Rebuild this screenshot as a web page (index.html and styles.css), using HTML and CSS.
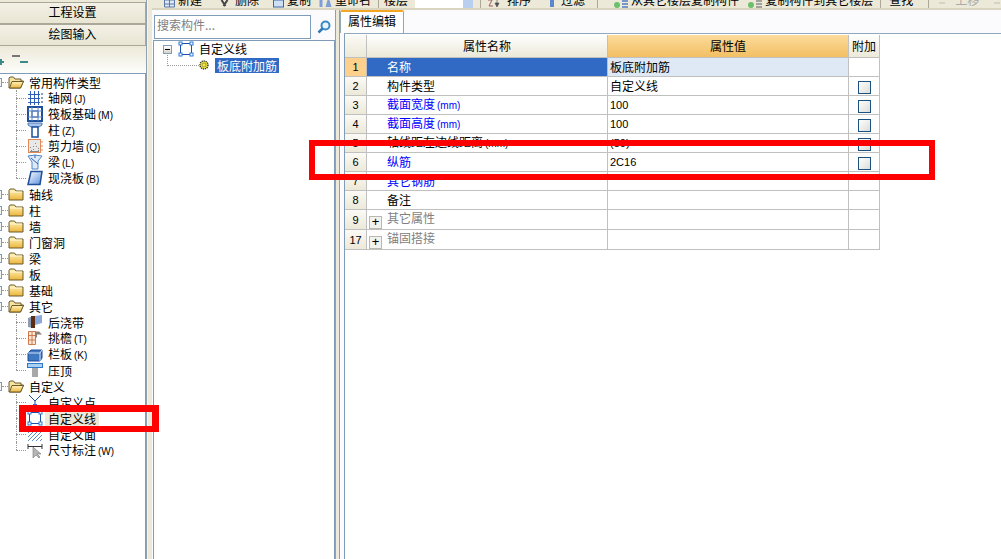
FILE: index.html
```html
<!DOCTYPE html>
<html lang="zh-CN">
<head>
    <meta charset="UTF-8">
    <meta name="viewport" content="width=device-width, initial-scale=1.0">
    <title>工程设置</title>
    <link rel="stylesheet" href="styles.css">
</head>
<body>
    <svg class="defs" width="0" height="0">
        <defs>
            <linearGradient id="gFolder" x1="0" y1="0" x2="0" y2="1">
                <stop offset="0" stop-color="#fff3b8"/>
                <stop offset="1" stop-color="#eeb53c"/>
            </linearGradient>
            <linearGradient id="gSlab" x1="0" y1="0" x2="1" y2="1">
                <stop offset="0" stop-color="#ffffff"/>
                <stop offset="1" stop-color="#5b8fdc"/>
            </linearGradient>
            <symbol id="folder" viewBox="0 0 16 16">
                <path d="M1 4.500V14h14V5H8L6.500 3H2z" fill="url(#gFolder)" stroke="#6b5a2a"/>
                <path d="M2 6h12" stroke="#fff8d8"/>
            </symbol>
            <symbol id="folderOpen" viewBox="0 0 16 16">
                <path d="M1 4v10h11.500L15.500 7H13V5H7L5.500 3H2z" fill="#f6e3a0" stroke="#6b5a2a"/>
                <path d="M1.500 14L4 7.500h11.500L12.500 14z" fill="url(#gFolder)" stroke="#6b5a2a"/>
            </symbol>
            <symbol id="grid" viewBox="0 0 16 16">
                <path d="M3.500 1v14M7.500 1v14M11.500 1v14M1 4.500h12M1 8.500h12M1 12.500h12" stroke="#2d5fb8" fill="none"/>
                <path d="M14 3h2v2h-2zM14 7h2v2h-2zM14 11h2v2h-2z" fill="#8a9fc0"/>
            </symbol>
            <symbol id="raft" viewBox="0 0 16 16">
                <rect x="1" y="1" width="14" height="14" fill="#fff" stroke="#1f4f9c" stroke-width="2"/>
                <rect x="5" y="5" width="6" height="6" fill="#fff" stroke="#1f4f9c"/>
                <path d="M1 5h14M1 11h14M5 1v14M11 1v14" stroke="#5f86c4"/>
            </symbol>
            <symbol id="column" viewBox="0 0 16 16">
                <path d="M1 1h14v2l-3 2H4L1 3z" fill="#a9c4ea" stroke="#4f7cb8"/>
                <path d="M5 5h6v10H5z" fill="#fff" stroke="#1f4f9c" stroke-width="1.500"/>
            </symbol>
            <symbol id="wall" viewBox="0 0 16 16">
                <rect x="1.500" y="1.500" width="12" height="13" fill="#e8e8e8" stroke="#e08a5a"/>
                <path d="M3 9h1v1H3zM6 11h1v1H6zM9 8h1v1H9zM11 12h1v1h-1zM4 12h1v1H4zM8 5h1v1H8zM11 10h1v1h-1zM6 8h1v1H6zM3 13h9v1H3z" fill="#888"/>
                <path d="M15 3v2M15 7v2M15 11v2" stroke="#e08a5a"/>
            </symbol>
            <symbol id="beam" viewBox="0 0 16 16">
                <path d="M1 2l7-1 7 1-4 5v8H5V8z" fill="#dfeaf8" stroke="#4f86c6"/>
                <path d="M4 4l7 6M8 1v3" stroke="#2d5fb8"/>
            </symbol>
            <symbol id="slab" viewBox="0 0 16 16">
                <path d="M4 1.500h11l-2 13H1z" fill="url(#gSlab)" stroke="#1f4f9c" stroke-width="1.500"/>
            </symbol>
            <symbol id="strip" viewBox="0 0 16 16">
                <path d="M1 4l5-2v12l-5-1z" fill="#8d9bb0"/>
                <path d="M4 2h4v12H4z" fill="#5a2d14"/>
                <path d="M8 2l7-1v8l-7 2z" fill="#8aa8dc"/>
            </symbol>
            <symbol id="eave" viewBox="0 0 16 16">
                <path d="M1.500 1.500h7v13h-7zM1.500 5.500h7M1.500 10h7M5 1.500v13" fill="#fbe6d8" stroke="#d07a4a"/>
                <path d="M8 1.500h4l3 3H10v3H8z" fill="#8b7f73"/>
            </symbol>
            <symbol id="parapet" viewBox="0 0 16 16">
                <path d="M1 7l3-3h11v8l-2 3H1z" fill="#3d78c0" stroke="#1f4f9c"/>
                <path d="M1 7h12v8M13 7l2-3" stroke="#cfe0f5" fill="none"/>
            </symbol>
            <symbol id="cap" viewBox="0 0 16 16">
                <rect x="0.500" y="1.500" width="15" height="4" fill="#a9d0f5" stroke="#2d78c8"/>
                <rect x="5" y="6" width="6" height="9" fill="#a8a8a8"/>
            </symbol>
            <symbol id="point" viewBox="0 0 16 16">
                <path d="M2 1l6 6 6-6M8 7v4" stroke="#1f4f9c" fill="none"/>
                <rect x="6" y="10" width="4" height="4" fill="#2d78d8"/>
            </symbol>
            <symbol id="line" viewBox="0 0 16 16">
                <rect x="2.500" y="2.500" width="11" height="11" fill="none" stroke="#1d4fa8"/>
                <rect x="1" y="1" width="3" height="3" fill="#fff" stroke="#2d78d8"/>
                <rect x="12" y="1" width="3" height="3" fill="#fff" stroke="#2d78d8"/>
                <rect x="1" y="12" width="3" height="3" fill="#fff" stroke="#2d78d8"/>
                <rect x="12" y="12" width="3" height="3" fill="#fff" stroke="#2d78d8"/>
            </symbol>
            <symbol id="area" viewBox="0 0 16 16">
                <path d="M1 7l6-6M1 11L11 1M1 15L15 1M5 15L15 5M9 15l6-6M13 15l2-2" stroke="#5d8ac8"/>
            </symbol>
            <symbol id="dim" viewBox="0 0 16 16">
                <path d="M1 2v5M15 2v5M1 4.500h14" stroke="#333" fill="none"/>
                <path d="M6 5v11l3-3 3 3 1-1-3-3h4z" fill="#b5b5b5" stroke="#777" stroke-width=".6"/>
            </symbol>
            <symbol id="gear" viewBox="0 0 10 10">
                <circle cx="5" cy="5" r="4" fill="#f5e93a" stroke="#333" stroke-width="1.400" stroke-dasharray="1.200 .8"/>
                <circle cx="5" cy="5" r="2" fill="#f5e93a" stroke="#555" stroke-width=".5"/>
            </symbol>
        </defs>
    </svg>

    <aside class="side">
        <div class="side-btn">工程设置</div>
        <div class="side-btn">绘图输入</div>
        <div class="side-tools">
            <svg width="30" height="12" viewBox="0 0 30 12"><path d="M-2 8h6M1 5v6" stroke="#3d8a8a" stroke-width="2"/><path d="M12 2h8" stroke="#777" stroke-width="2"/><path d="M20 8h8" stroke="#3d8a8a" stroke-width="2"/></svg>
        </div>
        <div class="tree">
            <div class="group"><span class="exp"></span><span class="dots"></span><svg class="ic"><use href="#folderOpen"/></svg><span class="label">常用构件类型</span></div>
            <ul class="kids">
                <li><svg class="ic"><use href="#grid"/></svg><span class="name">轴网<span class="key">(J)</span></span></li>
                <li><svg class="ic"><use href="#raft"/></svg><span class="name">筏板基础<span class="key">(M)</span></span></li>
                <li><svg class="ic"><use href="#column"/></svg><span class="name">柱<span class="key">(Z)</span></span></li>
                <li><svg class="ic"><use href="#wall"/></svg><span class="name">剪力墙<span class="key">(Q)</span></span></li>
                <li><svg class="ic"><use href="#beam"/></svg><span class="name">梁<span class="key">(L)</span></span></li>
                <li><svg class="ic"><use href="#slab"/></svg><span class="name">现浇板<span class="key">(B)</span></span></li>
            </ul>
            <div class="group"><span class="exp"></span><span class="dots"></span><svg class="ic"><use href="#folder"/></svg><span class="label">轴线</span></div>
            <div class="group"><span class="exp"></span><span class="dots"></span><svg class="ic"><use href="#folder"/></svg><span class="label">柱</span></div>
            <div class="group"><span class="exp"></span><span class="dots"></span><svg class="ic"><use href="#folder"/></svg><span class="label">墙</span></div>
            <div class="group"><span class="exp"></span><span class="dots"></span><svg class="ic"><use href="#folder"/></svg><span class="label">门窗洞</span></div>
            <div class="group"><span class="exp"></span><span class="dots"></span><svg class="ic"><use href="#folder"/></svg><span class="label">梁</span></div>
            <div class="group"><span class="exp"></span><span class="dots"></span><svg class="ic"><use href="#folder"/></svg><span class="label">板</span></div>
            <div class="group"><span class="exp"></span><span class="dots"></span><svg class="ic"><use href="#folder"/></svg><span class="label">基础</span></div>
            <div class="group"><span class="exp"></span><span class="dots"></span><svg class="ic"><use href="#folderOpen"/></svg><span class="label">其它</span></div>
            <ul class="kids">
                <li><svg class="ic"><use href="#strip"/></svg><span class="name">后浇带</span></li>
                <li><svg class="ic"><use href="#eave"/></svg><span class="name">挑檐<span class="key">(T)</span></span></li>
                <li><svg class="ic"><use href="#parapet"/></svg><span class="name">栏板<span class="key">(K)</span></span></li>
                <li><svg class="ic"><use href="#cap"/></svg><span class="name">压顶</span></li>
            </ul>
            <div class="group"><span class="exp"></span><span class="dots"></span><svg class="ic"><use href="#folderOpen"/></svg><span class="label">自定义</span></div>
            <ul class="kids">
                <li><svg class="ic"><use href="#point"/></svg><span class="name">自定义点</span></li>
                <li><svg class="ic"><use href="#line"/></svg><span class="name current">自定义线</span></li>
                <li><svg class="ic"><use href="#area"/></svg><span class="name">自定义面</span></li>
                <li><svg class="ic"><use href="#dim"/></svg><span class="name">尺寸标注<span class="key">(W)</span></span></li>
            </ul>
        </div>
    </aside>

    <div class="split-left"></div>

    <div class="main">
        <div class="toolbar">
            <div class="tool m12"><svg class="tb-ic" viewBox="0 -16 11 16"><path d="M.5 -8h10v7H.5zM.5 -4h10M5.500 -8v7" fill="#dfe8f5" stroke="#5a78a8"/></svg><span>新建</span></div>
            <div class="tool m16"><svg class="tb-ic wide" viewBox="0 -16 13 16"><path d="M3 -8l4 6M9 -8L5 -2" stroke="#444" stroke-width="2"/></svg><span>删除</span></div>
            <div class="tool m14"><svg class="tb-ic" viewBox="0 -16 11 16"><rect x=".5" y="-8" width="10" height="7" fill="#cfe0f5" stroke="#3d68a8"/></svg><span>复制</span></div>
            <div class="tool m7"><svg class="tb-ic wide" viewBox="0 -16 13 16"><path d="M1 -8h3v7H1zM7 -1l2-7h2l2 7" fill="#7f9fd8"/></svg><span>重命名</span></div>
            <div class="sep m7"></div>
            <div class="tool m5"><span>楼层</span></div>
            <div class="floor-select m7"><span class="floor-arrow"></span></div>
            <div class="sep m7"></div>
            <div class="tool m7 gap5"><svg class="tb-ic wide" viewBox="0 -16 14 16"><path d="M0 -8h4l-3 6h4" fill="none" stroke="#a06060"/><path d="M9 -8v4M7 -5l2 4 2-4z" fill="#555" stroke="#444" stroke-width=".6"/></svg><span>排序</span></div>
            <div class="tool m16"><svg class="tb-ic" viewBox="0 -16 11 16"><path d="M3 -8h4v7H3z" fill="#5a88cc"/></svg><span>过滤</span></div>
            <div class="sep m12"></div>
            <div class="tool m16"><svg class="tb-ic wide" viewBox="0 -16 14 16"><circle cx="3" cy="-3" r="3" fill="#6cbf6c"/><path d="M8 -7h6M8 -4h6M8 -1h6" stroke="#4f7cc8" stroke-width="1.500"/></svg><span>从其它楼层复制构件</span></div>
            <div class="tool m9"><svg class="tb-ic wide" viewBox="0 -16 14 16"><circle cx="3" cy="-3" r="3" fill="#6cbf6c"/><path d="M8 -7h6M8 -4h6M8 -1h6" stroke="#888" stroke-width="1.500"/></svg><span>复制构件到其它楼层</span></div>
            <div class="sep m7"></div>
            <div class="tool m8"><span>查找</span></div>
            <div class="sep m15"></div>
            <div class="tool m10 off"><svg class="tb-ic small" viewBox="0 -16 7 16"><path d="M0 -5h6" stroke="#bbb"/></svg><span>上移</span></div>
            <div class="tool m15 off"><svg class="tb-ic small" viewBox="0 -16 7 16"><path d="M0 -5h6" stroke="#bbb"/></svg></div>
        </div>

        <div class="content">
            <section class="mid">
                <div class="search">
                    <div class="search-box">搜索构件...</div>
                    <svg class="search-btn" viewBox="0 0 14 14"><circle cx="8.500" cy="5.500" r="4" fill="#e8f3fb" stroke="#3d8ac4" stroke-width="2"/><path d="M5.500 8.500L1.500 12.500" stroke="#2f78b8" stroke-width="2.500"/></svg>
                </div>
                <div class="parts">
                    <div class="part-row">
                        <span class="exp-box"></span>
                        <svg class="ic"><use href="#line"/></svg>
                        <span class="part-name">自定义线</span>
                    </div>
                    <div class="part-child">
                        <svg class="gear"><use href="#gear"/></svg>
                        <span class="selected">板底附加筋</span>
                    </div>
                </div>
            </section>

            <div class="split-right"></div>

            <section class="props">
                <div class="tabs"><div class="tab">属性编辑</div></div>
                <div class="sheet">
                    <table>
                        <thead>
                            <tr>
                                <th class="no"></th>
                                <th class="pname">属性名称</th>
                                <th class="pval">属性值</th>
                                <th class="padd">附加</th>
                            </tr>
                        </thead>
                        <tbody>
                            <tr class="active"><td class="no">1</td><td class="pname">名称</td><td class="pval">板底附加筋</td><td></td></tr>
                            <tr><td class="no">2</td><td class="pname">构件类型</td><td class="pval">自定义线</td><td><span class="check"></span></td></tr>
                            <tr><td class="no">3</td><td class="pname blue">截面宽度<span class="key">(mm)</span></td><td class="pval num">100</td><td><span class="check"></span></td></tr>
                            <tr><td class="no">4</td><td class="pname blue">截面高度<span class="key">(mm)</span></td><td class="pval num">100</td><td><span class="check"></span></td></tr>
                            <tr><td class="no">5</td><td class="pname">轴线距左边线距离<span class="key">(mm)</span></td><td class="pval num">(50)</td><td><span class="check"></span></td></tr>
                            <tr><td class="no">6</td><td class="pname blue">纵筋</td><td class="pval num">2C16</td><td><span class="check"></span></td></tr>
                            <tr><td class="no">7</td><td class="pname blue">其它钢筋</td><td class="pval"></td><td></td></tr>
                            <tr><td class="no">8</td><td class="pname">备注</td><td class="pval"></td><td></td></tr>
                            <tr><td class="no">9</td><td class="pname fold"><span class="plus">+</span>其它属性</td><td class="pval"></td><td></td></tr>
                            <tr><td class="no">17</td><td class="pname fold"><span class="plus">+</span>锚固搭接</td><td class="pval"></td><td></td></tr>
                        </tbody>
                    </table>
                </div>
            </section>
        </div>
    </div>

    <div class="red-box red-tree"></div>
    <div class="red-box red-row"></div>
</body>
</html>
```

FILE: styles.css
```css
* {
    box-sizing: border-box;
}

body {
    margin: 0;
    height: 559px;
    overflow: hidden;
    display: flex;
    position: relative;
    background-color: #fff;
    color: #000;
    font-family: "Noto Sans CJK SC", "Liberation Sans", sans-serif;
    font-size: 12px;
}

.defs {
    position: absolute;
}

ul {
    list-style: none;
    margin: 0;
    padding: 0;
}

.key {
    font-family: "Liberation Sans", sans-serif;
    font-size: 10px;
    margin-left: 2px;
}

/* left column */
.side {
    width: 147px;
    display: flex;
    flex-direction: column;
    padding-top: 2px;
    background-color: #ece9d8;
    border-right: 1px solid #8fa0b0;
}

.side-btn {
    height: 22px;
    line-height: 18px;
    text-align: center;
    background: linear-gradient(#f3f1e6, #e8e5d3);
    border: 1px solid #aca899;
    border-left: none;
}

.side-tools {
    height: 27px;
    padding-top: 8px;
    background: linear-gradient(#ece9d8, #fdfdfb);
    display: flex;
}

.tree {
    flex: 1;
    overflow: hidden;
    background-color: #fff;
    border-top: 1px solid #7f9db9;
    border-right: 1px solid #7f9db9;
}

.group {
    height: 16px;
    display: flex;
    align-items: center;
}

.exp {
    width: 9px;
    height: 9px;
    margin-left: -7px;
    border: 1px solid #7f9db9;
    background-color: #f4f4f0;
    flex-shrink: 0;
}

.dots {
    width: 6px;
    border-top: 1px dotted #999;
}

.ic {
    width: 16px;
    height: 16px;
    flex-shrink: 0;
}

.label {
    margin-left: 5px;
    line-height: 15px;
}

.kids li {
    position: relative;
    height: 16px;
    display: flex;
    align-items: center;
    padding-left: 27px;
}

.kids li::before {
    content: "";
    position: absolute;
    left: 16px;
    top: 8px;
    width: 10px;
    border-top: 1px dotted #999;
}

.kids li::after {
    content: "";
    position: absolute;
    left: 16px;
    top: 0;
    height: 16px;
    border-left: 1px dotted #999;
}

.kids li:last-child::after {
    height: 8px;
}

.name {
    margin-left: 2px;
    padding: 0 3px;
    line-height: 15px;
    white-space: nowrap;
}

.current {
    background-color: #ece9d8;
}

.split-left {
    width: 5px;
    background-color: #ece9d8;
    border-left: 1px solid #f6f4ea;
}

/* right side */
.main {
    flex: 1;
    min-width: 0;
    display: flex;
    flex-direction: column;
}

.toolbar {
    height: 10px;
    flex-shrink: 0;
    display: flex;
    align-items: flex-end;
    overflow: hidden;
    background-color: #ece9d8;
    border-bottom: 2px solid #d8d4c0;
    white-space: nowrap;
}

.tool {
    height: 16px;
    display: flex;
    flex-shrink: 0;
    gap: 3px;
    line-height: 16px;
}

.gap5 {
    gap: 5px;
}

.off {
    color: #aaa;
}

.tb-ic {
    width: 11px;
    height: 16px;
}

.tb-ic.wide {
    width: 14px;
}

.tb-ic.small {
    width: 7px;
    margin-right: 6px;
}

.sep {
    width: 1px;
    height: 10px;
    flex-shrink: 0;
    background-color: #aca899;
}

.floor-select {
    width: 58px;
    height: 10px;
    flex-shrink: 0;
    background-color: #fff;
    display: flex;
    justify-content: flex-end;
}

.floor-arrow {
    width: 10px;
    background-color: #b9cff0;
}

.m5 { margin-left: 5px; }
.m7 { margin-left: 7px; }
.m8 { margin-left: 8px; }
.m9 { margin-left: 9px; }
.m10 { margin-left: 10px; }
.m12 { margin-left: 12px; }
.m14 { margin-left: 14px; }
.m15 { margin-left: 15px; }
.m16 { margin-left: 16px; }

.content {
    flex: 1;
    display: flex;
    min-height: 0;
    background-color: #fbfbfd;
}

.mid {
    width: 184px;
    flex-shrink: 0;
    padding-top: 5px;
    display: flex;
    flex-direction: column;
    border-right: 1px solid #8fa0b0;
}

.search {
    height: 24px;
    padding-left: 2px;
    display: flex;
    align-items: center;
    margin-bottom: 1px;
}

.search-box {
    width: 157px;
    height: 24px;
    line-height: 18px;
    padding-left: 2px;
    color: #808080;
    background-color: #fff;
    border: 1px solid #7f9db9;
}

.search-btn {
    width: 14px;
    height: 14px;
    margin-left: 6px;
}

.parts {
    flex: 1;
    margin-left: 1px;
    background-color: #fff;
    border: 1px solid #7f9db9;
    border-bottom: none;
}

.part-row {
    height: 16px;
    display: flex;
    align-items: center;
    padding-left: 9px;
}

.exp-box {
    position: relative;
    width: 9px;
    height: 9px;
    margin-right: 6px;
    border: 1px solid #7f9db9;
    background: linear-gradient(#fff, #d8d4c8) padding-box;
}

.exp-box::after {
    content: "";
    position: absolute;
    left: 1px;
    top: 3px;
    width: 5px;
    border-top: 1px solid #000;
}

.part-name {
    margin-left: 5px;
    line-height: 14px;
    margin-bottom: 1px;
}

.part-child {
    position: relative;
    height: 16px;
    display: flex;
    align-items: center;
    padding-left: 45px;
}

.part-child::before {
    content: "";
    position: absolute;
    left: 13px;
    top: -2px;
    width: 31px;
    height: 10px;
    border-left: 1px dotted #999;
    border-bottom: 1px dotted #999;
}

.gear {
    position: relative;
    width: 10px;
    height: 10px;
    margin-right: 6px;
}

.selected {
    padding: 0 2px;
    line-height: 15px;
    color: #fff;
    background-color: #316ac5;
}

.split-right {
    width: 4px;
    flex-shrink: 0;
    background-color: #ece9d8;
    border-right: 1px solid #8fa0b0;
}

.props {
    flex: 1;
    min-width: 0;
    display: flex;
    flex-direction: column;
}

.tabs {
    height: 23px;
    flex-shrink: 0;
}

.tab {
    width: 64px;
    height: 23px;
    line-height: 18px;
    text-align: center;
    background-color: #fff;
    border: 1px solid #91a7b4;
    border-top: 2px solid #f5a623;
    border-bottom: none;
    border-radius: 2px 2px 0 0;
}

.sheet {
    flex: 1;
    margin-left: 4px;
    padding-top: 1px;
    background-color: #fff;
    border-top: 1px solid #8fa8bc;
    border-left: 1px solid #7f9db9;
}

table {
    width: 535px;
    table-layout: fixed;
    border-collapse: separate;
    border-spacing: 0;
}

th {
    height: 23px;
    padding: 0 0 2px;
    font-weight: normal;
    background: linear-gradient(#ffffff, #ece9d8);
    border-right: 1px solid #c0c0c0;
    border-bottom: 1px solid #c0c0c0;
}

td {
    height: 19px;
    padding: 0;
    line-height: 16px;
    white-space: nowrap;
    overflow: hidden;
    border-right: 1px solid #c0c0c0;
    border-bottom: 1px solid #c0c0c0;
    text-align: center;
}

.no {
    width: 22px;
    background: linear-gradient(#fbfaf5, #ece9d8);
    font-family: "Liberation Sans", sans-serif;
    font-size: 11px;
    text-align: center;
}

.pname {
    width: 241px;
}

td.pname {
    text-align: left;
    padding-left: 20px;
}

td.pval {
    text-align: left;
    padding-left: 2px;
}

.padd {
    width: 31px;
}

th.pval {
    width: 241px;
    background: linear-gradient(#fcdc9c, #f2bf63);
}

.num {
    font-family: "Liberation Sans", sans-serif;
    font-size: 11px;
}

.blue {
    color: #0000ff;
}

td.fold {
    padding-left: 2px;
    color: #808080;
}

.plus {
    display: inline-block;
    width: 13px;
    height: 13px;
    line-height: 10px;
    margin-right: 5px;
    text-align: center;
    vertical-align: -3px;
    color: #000;
    font-family: "Liberation Sans", sans-serif;
    font-size: 13px;
    background-color: #f2f2ee;
    border: 1px solid #b8b8b0;
}

.active .no {
    background: #fdd08c;
}

.active .pname {
    color: #fff;
    background-color: #316ac5;
}

.active .pval {
    background-color: #dfe8f5;
}

.check {
    display: inline-block;
    width: 13px;
    height: 13px;
    vertical-align: middle;
    border: 1px solid #1c5180;
    background: linear-gradient(135deg, #ffffff, #dcdcd7);
}

/* red marks over the screenshot */
.red-box {
    position: absolute;
    border-style: solid;
    border-color: #ff0000;
}

.red-tree {
    left: 19px;
    top: 405px;
    width: 140px;
    height: 27px;
    border-width: 7px 7px 6px;
}

.red-row {
    left: 309px;
    top: 140px;
    width: 626px;
    height: 40px;
    border-width: 6px;
}
```
